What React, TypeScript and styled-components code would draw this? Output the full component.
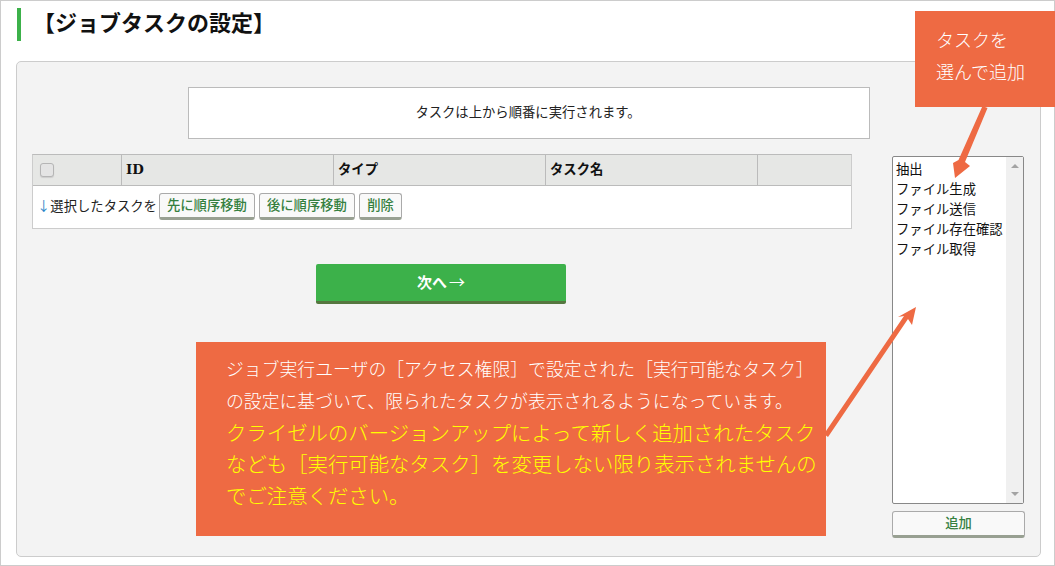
import styled, { createGlobalStyle } from 'styled-components'

const GlobalStyle = createGlobalStyle`
  html, body {
    background: #fff;
    height: 100%;
    margin: 0;
    overflow: hidden;
  }
  * {
    box-sizing: border-box;
  }
`

const uiFont = `"Noto Sans CJK JP", "Noto Sans", sans-serif`

const Frame = styled.div`
  border: 1px solid #ccc;
  color: #222;
  font-family: ${uiFont};
  font-size: 13.33px;
  height: 566px;
  padding: 7px 13px 0 15px;
  position: relative;
  width: 1055px;
`

const Title = styled.h1`
  border-left: 4px solid #3cb14a;
  color: #111;
  font-size: 22px;
  font-weight: 700;
  height: 33px;
  line-height: 27px;
  margin: 0 0 20px 1px;
  padding-left: 12px;
`

const Panel = styled.div`
  background: #f3f3f3;
  border: 1px solid #ccc;
  border-radius: 5px;
  display: grid;
  gap: 40px;
  grid-template-columns: 820px 133px;
  height: 496px;
  padding: 25px 0 0 15px;
`

const MainColumn = styled.div`
  display: flex;
  flex-direction: column;
`

const Notice = styled.div`
  align-items: center;
  background: #fff;
  border: 1px solid #bbb;
  display: flex;
  height: 52px;
  justify-content: center;
  margin: 0 0 15px 156px;
  padding: 0 2px 3px 0;
  width: 682px;
`

const TaskTable = styled.div`
  background: #fff;
  border: 1px solid #ccc;
  border-top-color: #bbb;
  height: 75px;
`

const HeadRow = styled.div`
  background: #e6e7e5;
  border-bottom: 1px solid #bbb;
  display: grid;
  grid-template-columns: 89px 212px 212px 212px 1fr;
  height: 31px;
`

const HeadCell = styled.div`
  align-items: center;
  border-right: 1px solid #bbb;
  color: #111;
  display: flex;
  font-family: "DejaVu Serif", "Noto Sans CJK JP", serif;
  font-size: 13.33px;
  font-weight: 700;
  padding: 0 0 3px 4px;
  &:last-child {
    border-right: 0;
  }
`

const CheckCell = styled(HeadCell)`
  padding: 0 0 1px 7px;
`

const CheckBox = styled.span`
  background: #e4e4e4;
  border: 1px solid #b5b5b5;
  border-radius: 3px;
  box-shadow: 0 1px 1px #ccc;
  height: 14px;
  width: 14px;
`

const ActionRow = styled.div`
  align-items: center;
  display: flex;
  gap: 4px;
  height: 42px;
  padding: 0 0 1px 4px;
`

const ActionLabel = styled.span`
  margin: -3px -2px 0 0;
  white-space: nowrap;
`

const DownArrow = styled.span`
  color: #2a86c8;
`

const GrayButton = styled.button<{ $wide?: boolean }>`
  background: #f9f9f9;
  border: 1px solid #aaa;
  border-bottom: 3px solid #98a092;
  border-radius: 3px;
  color: #35803f;
  cursor: pointer;
  flex: none;
  font-family: ${uiFont};
  font-size: 13.33px;
  font-weight: 500;
  height: 27px;
  line-height: 1;
  padding: 0 0 2px;
  width: ${({ $wide }) => ($wide ? '96px' : '43px')};
`

const NextButton = styled.button`
  align-self: center;
  background: #3cb14a;
  border: 0;
  border-bottom: 3px solid #55763f;
  border-radius: 2px;
  color: #fff;
  cursor: pointer;
  font-family: ${uiFont};
  font-size: 15px;
  font-weight: 700;
  height: 40px;
  margin: 35px 2px 0 0;
  padding: 0 0 3px;
  width: 250px;
`

const NextArrow = styled.span`
  font-size: 16px;
  font-weight: 400;
  margin-left: 2px;
`

const SideColumn = styled.div`
  display: flex;
  flex-direction: column;
  gap: 7px;
  padding-top: 69px;
`

const ListBox = styled.div`
  background: #fff;
  border: 1px solid #888;
  border-radius: 2px;
  display: flex;
  height: 348px;
  width: 132px;
`

const ListItems = styled.ul`
  color: #111;
  flex: 1;
  font-size: 13.33px;
  line-height: 19.9px;
  list-style: none;
  margin: 0;
  padding: 2px 0 0 3px;
  white-space: nowrap;
`

const ScrollTrack = styled.div`
  align-items: center;
  background: #f0f0f0;
  display: flex;
  flex-direction: column;
  justify-content: space-between;
  padding: 7px 0;
  width: 17px;
`

const ScrollArrow = styled.span<{ $down?: boolean }>`
  border-left: 4px solid transparent;
  border-right: 4px solid transparent;
  ${({ $down }) => ($down ? 'border-top: 4px solid #a3a3a3;' : 'border-bottom: 4px solid #a3a3a3;')}
`

const AddButton = styled(GrayButton)`
  width: 133px;
`

const Callout = styled.div`
  background: #ee6a43;
  color: #fff;
  font-family: ${uiFont};
  font-weight: 300;
  position: absolute;
  white-space: nowrap;
`

const TaskCallout = styled(Callout)`
  font-size: 18px;
  height: 96px;
  left: 914px;
  line-height: 32px;
  padding: 12px 0 0 21px;
  top: 10px;
  width: 140px;
`

const NoteCallout = styled(Callout)`
  height: 194px;
  left: 195px;
  line-height: 31.8px;
  padding: 11px 0 0 30px;
  top: 341px;
  width: 630px;
`

const NoteLine = styled.div<{ $warn?: boolean }>`
  color: ${({ $warn }) => ($warn ? '#ffff00' : '#fff')};
  font-size: ${({ $warn }) => ($warn ? '20.4px' : '17.85px')};
`

const ArrowLayer = styled.svg`
  height: 566px;
  left: -1px;
  pointer-events: none;
  position: absolute;
  top: -1px;
  width: 1055px;
`

export default function App() {
  return (
    <Frame>
      <GlobalStyle />
      <Title>【ジョブタスクの設定】</Title>
      <Panel>
        <MainColumn>
          <Notice>タスクは上から順番に実行されます。</Notice>
          <TaskTable>
            <HeadRow>
              <CheckCell>
                <CheckBox />
              </CheckCell>
              <HeadCell>ID</HeadCell>
              <HeadCell>タイプ</HeadCell>
              <HeadCell>タスク名</HeadCell>
              <HeadCell />
            </HeadRow>
            <ActionRow>
              <ActionLabel>
                <DownArrow>↓</DownArrow>選択したタスクを
              </ActionLabel>
              <GrayButton $wide>先に順序移動</GrayButton>
              <GrayButton $wide>後に順序移動</GrayButton>
              <GrayButton>削除</GrayButton>
            </ActionRow>
          </TaskTable>
          <NextButton>
            次へ<NextArrow>→</NextArrow>
          </NextButton>
        </MainColumn>
        <SideColumn>
          <ListBox>
            <ListItems>
              <li>抽出</li>
              <li>ファイル生成</li>
              <li>ファイル送信</li>
              <li>ファイル存在確認</li>
              <li>ファイル取得</li>
            </ListItems>
            <ScrollTrack>
              <ScrollArrow />
              <ScrollArrow $down />
            </ScrollTrack>
          </ListBox>
          <AddButton>追加</AddButton>
        </SideColumn>
      </Panel>
      <ArrowLayer viewBox="0 0 1055 566">
        <g fill="#ee6a43">
          <path d="M982.5 106 L987.5 108 L965 162 L970 166 L955 178 L953 163 L958.500 160 Z" />
          <path d="M824 434 L828 437 L908 319 L912 325 L916 307 L898 317 L904 316 Z" />
        </g>
      </ArrowLayer>
      <TaskCallout>
        <div>タスクを</div>
        <div>選んで追加</div>
      </TaskCallout>
      <NoteCallout>
        <NoteLine>ジョブ実行ユーザの［アクセス権限］で設定された［実行可能なタスク］</NoteLine>
        <NoteLine>の設定に基づいて、限られたタスクが表示されるようになっています。</NoteLine>
        <NoteLine $warn>クライゼルのバージョンアップによって新しく追加されたタスク</NoteLine>
        <NoteLine $warn>なども［実行可能なタスク］を変更しない限り表示されませんの</NoteLine>
        <NoteLine $warn>でご注意ください。</NoteLine>
      </NoteCallout>
    </Frame>
  )
}
